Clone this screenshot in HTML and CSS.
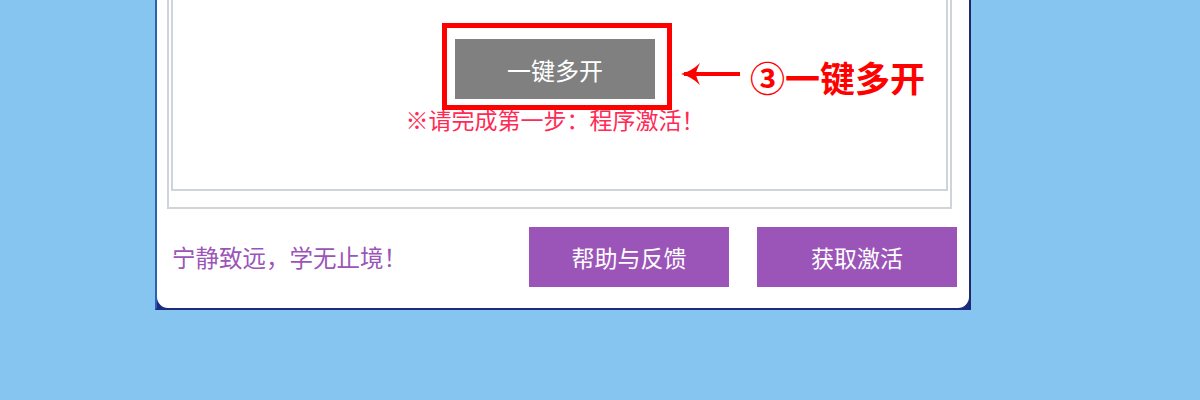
FILE: index.html
```html
<!DOCTYPE html>
<html lang="zh-CN">
<head>
    <meta charset="UTF-8">
    <title>一键多开</title>
    <link rel="stylesheet" href="styles.css">
</head>
<body>
    <div class="window">
        <div class="window-body">
            <div class="group-outer">
                <div class="group-inner">
                    <button type="button" class="multi-btn">一键多开</button>
                    <div class="warning">※请完成第一步：程序激活！</div>
                </div>
            </div>
            <div class="footer">
                <div class="motto">宁静致远，学无止境！</div>
                <button type="button" class="purple-btn">帮助与反馈</button>
                <button type="button" class="purple-btn">获取激活</button>
            </div>
        </div>

        <!-- annotation overlay -->
        <div class="mark-box"></div>
        <svg class="mark-arrow" width="64" height="26" viewBox="0 0 64 26">
            <path d="M6 12 H62" stroke="#ff0000" stroke-width="4" fill="none"/>
            <path d="M22 1 Q14 9 3 12 Q14 15 22 23 Q18 15 18 12 Q18 9 22 1 Z" fill="#ff0000"/>
        </svg>
        <div class="mark-text">③一键多开</div>
    </div>
</body>
</html>
```

FILE: styles.css
```css
body {
    margin: 0;
    background-color: #86c5ef;
    font-family: "Noto Sans CJK SC", "Noto Sans", sans-serif;
}
.window {
    position: relative;
    margin-left: 155px;
    width: 812px;
    background-color: #1b2c80;
    border-left: 2px solid #2b60b2;
    border-right: 2px solid #1e2a6c;
    border-bottom: 2px solid #1b2c80;
}
.window-body {
    height: 308px;
    background-color: #fff;
    border-radius: 0 0 11px 11px;
    padding: 0 12px 0 10px;
    box-sizing: border-box;
    display: flex;
    flex-direction: column;
}
.group-outer {
    border: 2px solid #cfd3da;
    border-top: none;
    width: 785px;
    box-sizing: border-box;
    padding: 0 2px 16px 2px;
}
.group-inner {
    border: 2px solid #cfd3da;
    border-top: none;
    height: 191px;
    box-sizing: border-box;
    display: flex;
    flex-direction: column;
    align-items: center;
    padding: 39px 9px 0 0;
}
.multi-btn {
    width: 200px;
    height: 60px;
    border: none;
    background-color: #808080;
    color: #fff;
    font-family: inherit;
    font-size: 24px;
    padding: 0;
}
.warning {
    margin-top: 7px;
    color: #ff2a55;
    font-size: 23px;
    line-height: 26px;
}
.footer {
    display: flex;
    align-items: center;
    gap: 28px;
    margin-top: 18px;
    padding-left: 5px;
}
.motto {
    flex: 1;
    color: #9b55b8;
    font-size: 23.5px;
}
.purple-btn {
    width: 200px;
    height: 60px;
    border: none;
    background-color: #9b55b8;
    color: #fff;
    font-family: inherit;
    font-size: 23px;
    padding: 0;
}
.mark-box {
    position: absolute;
    left: 285px;
    top: 23px;
    width: 230px;
    height: 87px;
    border: 5px solid #ff0000;
    box-sizing: border-box;
}
.mark-arrow {
    position: absolute;
    left: 521px;
    top: 62px;
}
.mark-text {
    position: absolute;
    left: 593px;
    top: 57px;
    color: #ff0000;
    font-size: 35px;
    font-weight: bold;
    line-height: 40px;
}
```
